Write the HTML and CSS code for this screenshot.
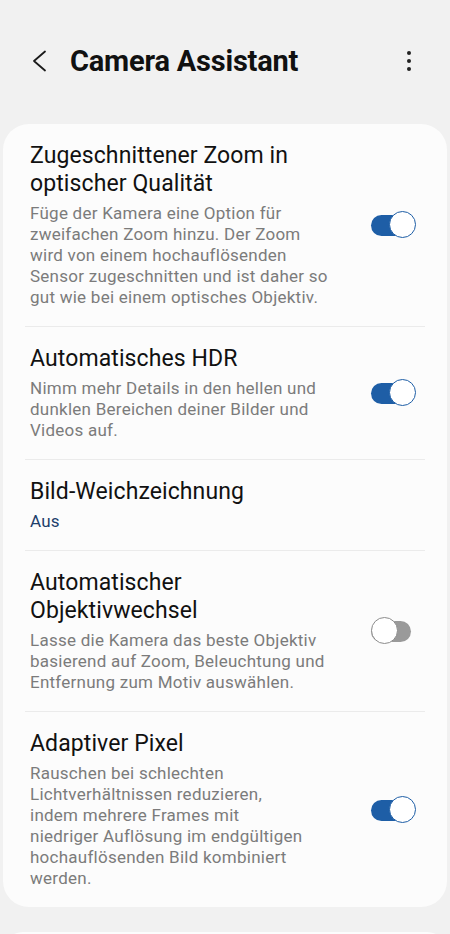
FILE: index.html
```html
<!DOCTYPE html>
<html>
<head>
  <title>Camera Assistant</title>
  <link rel="stylesheet" href="styles.css">
</head>
<body>
  <div class="header">
    <svg class="back" width="16" height="22" viewBox="0 0 16 22">
      <polyline points="13,1.5 2,11 13,20.5" fill="none" stroke="#1a1a1a" stroke-width="1.8" stroke-linecap="round" stroke-linejoin="round"/>
    </svg>
    <h1 class="title">Camera Assistant</h1>
    <div class="more"><span></span><span></span><span></span></div>
  </div>

  <div class="card">
    <div class="item">
      <div class="text">
        <div class="name">Zugeschnittener Zoom in<br>optischer Qualität</div>
        <div class="desc">Füge der Kamera eine Option für<br>zweifachen Zoom hinzu. Der Zoom<br>wird von einem hochauflösenden<br>Sensor zugeschnitten und ist daher so<br>gut wie bei einem optisches Objektiv.</div>
      </div>
      <div class="switch on"><div class="knob"></div></div>
    </div>

    <div class="item">
      <div class="text">
        <div class="name">Automatisches HDR</div>
        <div class="desc">Nimm mehr Details in den hellen und<br>dunklen Bereichen deiner Bilder und<br>Videos auf.</div>
      </div>
      <div class="switch on"><div class="knob"></div></div>
    </div>

    <div class="item">
      <div class="text">
        <div class="name">Bild-Weichzeichnung</div>
        <div class="value">Aus</div>
      </div>
    </div>

    <div class="item">
      <div class="text">
        <div class="name">Automatischer<br>Objektivwechsel</div>
        <div class="desc">Lasse die Kamera das beste Objektiv<br>basierend auf Zoom, Beleuchtung und<br>Entfernung zum Motiv auswählen.</div>
      </div>
      <div class="switch"><div class="knob"></div></div>
    </div>

    <div class="item">
      <div class="text">
        <div class="name">Adaptiver Pixel</div>
        <div class="desc">Rauschen bei schlechten<br>Lichtverhältnissen reduzieren,<br>indem mehrere Frames mit<br>niedriger Auflösung im endgültigen<br>hochauflösenden Bild kombiniert<br>werden.</div>
      </div>
      <div class="switch on"><div class="knob"></div></div>
    </div>
  </div>

  <div class="card next"></div>
</body>
</html>
```

FILE: styles.css
```css
body {
  margin: 0;
  padding: 0;
  background-color: #f1f1f1;
  font-family: Roboto, "Noto Sans", sans-serif;
  color: #111;
  height: 934px;
  overflow: hidden;
}

.header {
  display: flex;
  align-items: center;
  height: 42px;
  padding: 40px 0 0 32px;
}

.back {
  display: block;
  margin-right: 22px;
}

.title {
  flex: 1;
  margin: 0;
  font-size: 29px;
  font-weight: 700;
  color: #111;
  letter-spacing: -0.2px;
}

.more {
  display: flex;
  flex-direction: column;
  gap: 4px;
  margin-right: 39px;
}

.more span {
  display: block;
  width: 4px;
  height: 4px;
  border-radius: 50%;
  background-color: #222;
}

.card {
  margin: 42px 3px 0;
  padding: 0 22px;
  background-color: #fcfcfc;
  border-radius: 26px;
}

.card.next {
  margin-top: 25px;
  height: 40px;
}

.item {
  display: flex;
  align-items: center;
  padding: 18px 9px 18px 5px;
  border-top: 1px solid #ebebeb;
}

.item:first-child {
  border-top: none;
}

.text {
  flex: 1;
}

.name {
  font-size: 23px;
  line-height: 28px;
  letter-spacing: 0.1px;
  color: #111;
}

.desc {
  margin-top: 5px;
  font-size: 17px;
  line-height: 21px;
  letter-spacing: 0.25px;
  color: #7b7b7b;
}

.value {
  margin-top: 5px;
  font-size: 17px;
  line-height: 21px;
  letter-spacing: 0.25px;
  color: #1d3e6b;
}

.switch {
  position: relative;
  width: 45px;
  height: 28px;
}

.switch::before {
  content: "";
  position: absolute;
  left: 0;
  top: 4px;
  width: 40px;
  height: 21px;
  border-radius: 11px;
  background-color: #9a9a9a;
}

.switch.on::before {
  background-color: #1e5ea6;
}

.knob {
  position: absolute;
  left: 0;
  top: 0;
  width: 25px;
  height: 25px;
  border: 1.5px solid #8c8c8c;
  border-radius: 50%;
  background-color: #fff;
}

.switch.on .knob {
  left: auto;
  right: 0;
  border-color: #1e5ea6;
}
```
